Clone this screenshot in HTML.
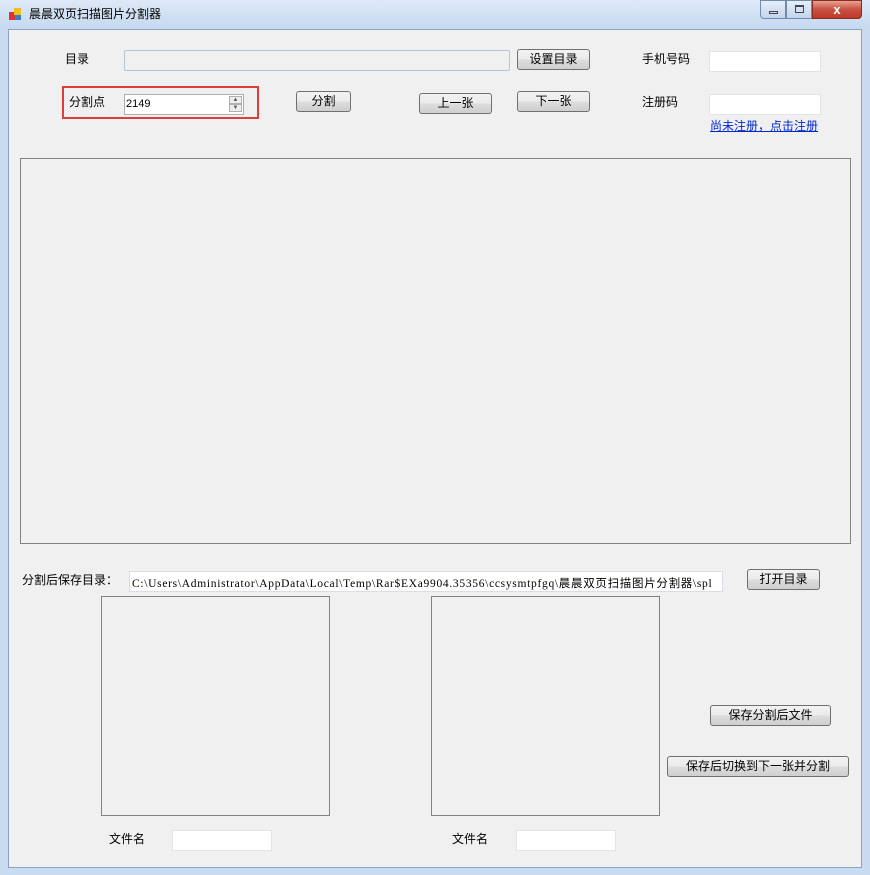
<!DOCTYPE html>
<html><head><meta charset="utf-8"><style>
*{margin:0;padding:0;box-sizing:border-box}
body{width:870px;height:875px;overflow:hidden;background:#c9dbf0;font-family:"Liberation Sans","Noto Sans CJK SC",sans-serif;font-size:12px;color:#000;position:relative}
.a{position:absolute}
#title{left:0;top:0;width:870px;height:30px;background:linear-gradient(#dde9f7,#c4d8ef)}
#client{left:8px;top:29px;width:854px;height:839px;background:#f0f0f0;border:1px solid #8ba3c1}
.btn{position:absolute;border:1px solid #707070;border-radius:3px;background:linear-gradient(#f2f2f2 0%,#ebebeb 50%,#dddddd 51%,#cfcfcf 100%);text-align:center;line-height:18px;font-size:12px}
.tb{position:absolute;background:#fff;border:1px solid #c5d0dc;border-top-color:#abadb3}
.lbl{position:absolute;font-size:12px;line-height:14px;white-space:nowrap}
.box{position:absolute;border:1px solid #828282}
</style></head><body>
<div class="a" id="title"></div>
<div class="a" style="left:9px;top:8px;width:12px;height:12px">
<div class="a" style="left:0;top:4px;width:6px;height:8px;background:#d33"></div>
<div class="a" style="left:5px;top:0;width:7px;height:7px;background:#f0c020"></div>
<div class="a" style="left:6px;top:7px;width:6px;height:5px;background:#3a7cd0"></div></div>
<div class="lbl" style="left:29px;top:7px">晨晨双页扫描图片分割器</div>
<div class="a" style="left:760px;top:0;width:26px;height:19px;border:1px solid #6f8bb0;border-radius:0 0 0 4px;background:linear-gradient(#e6eef8,#c4d5ea)"><div class="a" style="left:8px;top:10px;width:9px;height:3px;border:1px solid #445"></div></div>
<div class="a" style="left:786px;top:0;width:26px;height:19px;border:1px solid #6f8bb0;background:linear-gradient(#e6eef8,#c4d5ea)"><div class="a" style="left:8px;top:4px;width:9px;height:8px;border:1px solid #445;border-top-width:2px"></div></div>
<div class="a" style="left:812px;top:0;width:50px;height:19px;border:1px solid #8a2a20;border-radius:0 0 4px 0;background:linear-gradient(#e8a493,#c75040 50%,#c0392b);color:#fff;font-weight:bold;text-align:center;line-height:17px;font-size:13px">x</div>
<div class="a" id="client"></div>

<div class="lbl" style="left:65px;top:52px">目录</div>
<div class="tb" style="left:124px;top:50px;width:386px;height:21px;background:#f0f0f0;border-color:#b8c4d2;border-radius:2px"></div>
<div class="btn" style="left:517px;top:49px;width:73px;height:21px">设置目录</div>
<div class="lbl" style="left:642px;top:52px">手机号码</div>
<div class="tb" style="left:709px;top:51px;width:112px;height:21px;border-color:#e2e3ea"></div>

<div class="a" style="left:62px;top:86px;width:197px;height:33px;border:2px solid #e03c3c"></div>
<div class="lbl" style="left:69px;top:95px">分割点</div>
<div class="tb" style="left:124px;top:94px;width:120px;height:21px;border-color:#abadb3"><span class="a" style="left:1px;top:3px;font-size:11px">2149</span>
<div class="a" style="left:104px;top:1px;width:13px;height:8px;border:1px solid #b0b0b0;background:#eee;font-size:6px;line-height:6px;text-align:center;color:#555">▲</div>
<div class="a" style="left:104px;top:9px;width:13px;height:8px;border:1px solid #b0b0b0;background:#eee;font-size:6px;line-height:6px;text-align:center;color:#555">▼</div></div>
<div class="btn" style="left:296px;top:91px;width:55px;height:21px">分割</div>
<div class="btn" style="left:419px;top:93px;width:73px;height:21px">上一张</div>
<div class="btn" style="left:517px;top:91px;width:73px;height:21px">下一张</div>
<div class="lbl" style="left:642px;top:95px">注册码</div>
<div class="tb" style="left:709px;top:94px;width:112px;height:21px;border-color:#e2e3ea"></div>
<div class="lbl" style="left:710px;top:119px;color:#0026d0;text-decoration:underline">尚未注册，点击注册</div>

<div class="box" style="left:20px;top:158px;width:831px;height:386px"></div>

<div class="lbl" style="left:22px;top:573px">分割后保存目录：</div>
<div class="tb" style="left:129px;top:571px;width:594px;height:21px;border-color:#d8dde6;overflow:hidden"><span class="a" style="left:2px;top:3px;font-family:'Liberation Serif','Noto Sans CJK SC',serif;font-size:11.5px;white-space:nowrap;letter-spacing:0.7px">C:\Users\Administrator\AppData\Local\Temp\Rar$EXa9904.35356\ccsysmtpfgq\晨晨双页扫描图片分割器\spl</span></div>
<div class="btn" style="left:747px;top:569px;width:73px;height:21px">打开目录</div>

<div class="box" style="left:101px;top:596px;width:229px;height:220px"></div>
<div class="box" style="left:431px;top:596px;width:229px;height:220px"></div>
<div class="btn" style="left:710px;top:705px;width:121px;height:21px">保存分割后文件</div>
<div class="btn" style="left:667px;top:756px;width:182px;height:21px">保存后切换到下一张并分割</div>

<div class="lbl" style="left:109px;top:832px">文件名</div>
<div class="tb" style="left:172px;top:830px;width:100px;height:21px;border-color:#e2e3ea"></div>
<div class="lbl" style="left:452px;top:832px">文件名</div>
<div class="tb" style="left:516px;top:830px;width:100px;height:21px;border-color:#e2e3ea"></div>
</body></html>
